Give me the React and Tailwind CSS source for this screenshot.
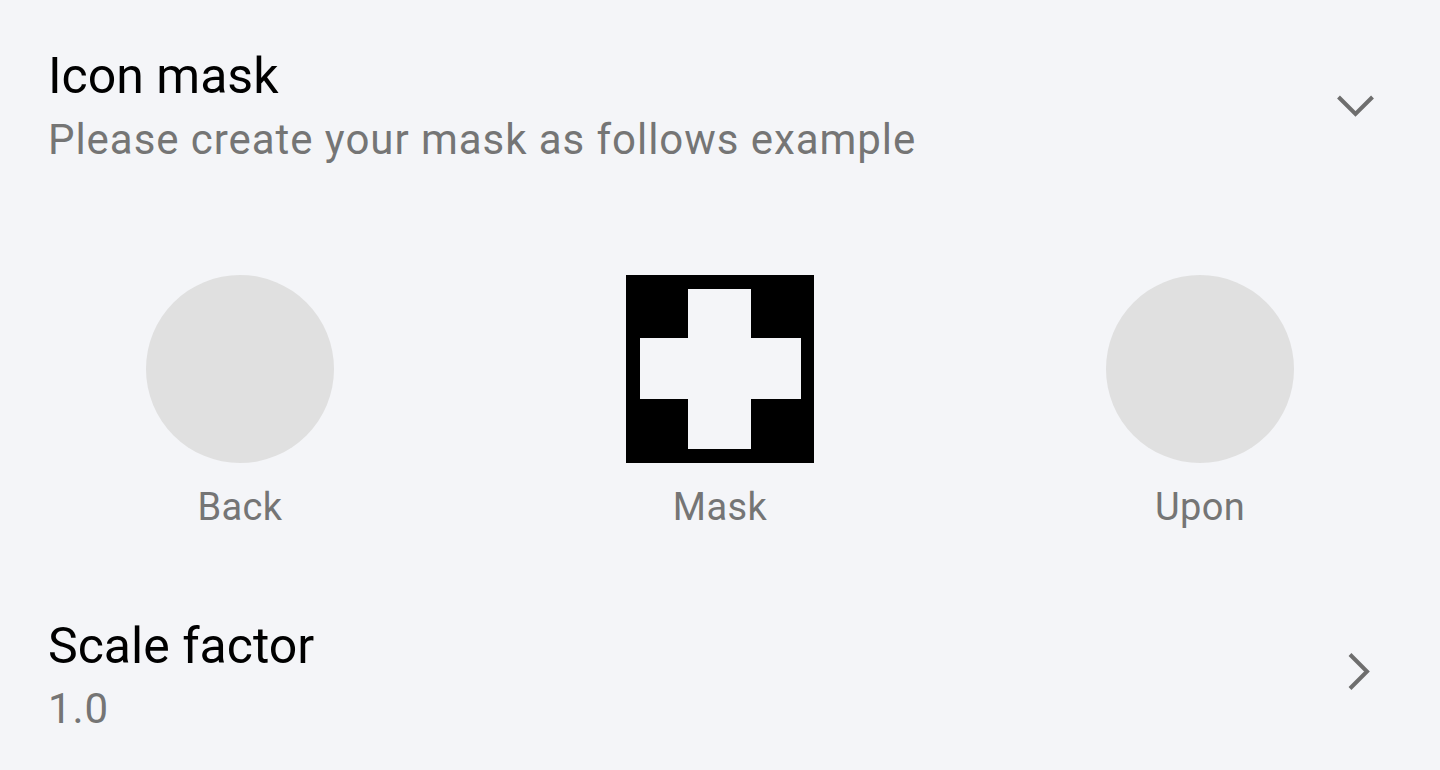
const font = { fontFamily: "Roboto, 'Noto Sans', sans-serif" };

function ChevronDown() {
  return (
    <svg width="48" height="48" viewBox="0 0 48 48" className="shrink-0">
      <polyline points="6.5,15 23.5,32 40.5,15" fill="none" stroke="#6e6e6e" strokeWidth="4" />
    </svg>
  );
}

function ChevronRight() {
  return (
    <svg width="48" height="48" viewBox="0 0 48 48" className="shrink-0">
      <polyline points="18,3.5 35,20.5 18,37.5" fill="none" stroke="#6e6e6e" strokeWidth="4" />
    </svg>
  );
}

function MaskIcon() {
  return (
    <svg width="188" height="188" viewBox="0 0 188 188">
      <rect width="188" height="188" fill="#000" />
      <path d="M62 14 H125 V63 H175 V124 H125 V174 H62 V124 H14 V63 H62 Z" fill="#f4f5f8" />
    </svg>
  );
}

function Preview({ label, children }) {
  return (
    <div className="flex flex-col items-center">
      {children}
      <span className="mt-[22px] text-[38px] leading-[44px] tracking-[0.4px] text-[#757575]">{label}</span>
    </div>
  );
}

export default function App() {
  return (
    <div className="w-[1440px] h-[770px] overflow-hidden bg-[#f4f5f8]" style={font}>
      <div className="flex items-center justify-between pl-12 pr-[60px] pt-[47px]">
        <div>
          <div className="text-[50px] leading-[58px] text-black">Icon mask</div>
          <div className="mt-[11px] text-[42px] leading-[48px] tracking-[0.95px] text-[#757575]">
            Please create your mask as follows example
          </div>
        </div>
        <ChevronDown />
      </div>

      <div className="mt-[111px] grid grid-cols-3">
        <Preview label="Back">
          <div className="w-[188px] h-[188px] rounded-full bg-[#e0e0e0]" />
        </Preview>
        <Preview label="Mask">
          <MaskIcon />
        </Preview>
        <Preview label="Upon">
          <div className="w-[188px] h-[188px] rounded-full bg-[#e0e0e0]" />
        </Preview>
      </div>

      <div className="mt-[88px] flex items-center justify-between pl-12 pr-[60px]">
        <div>
          <div className="text-[50px] leading-[58px] text-black">Scale factor</div>
          <div className="mt-[10px] text-[42px] leading-[48px] tracking-[0.95px] text-[#757575]">1.0</div>
        </div>
        <ChevronRight />
      </div>
    </div>
  );
}
